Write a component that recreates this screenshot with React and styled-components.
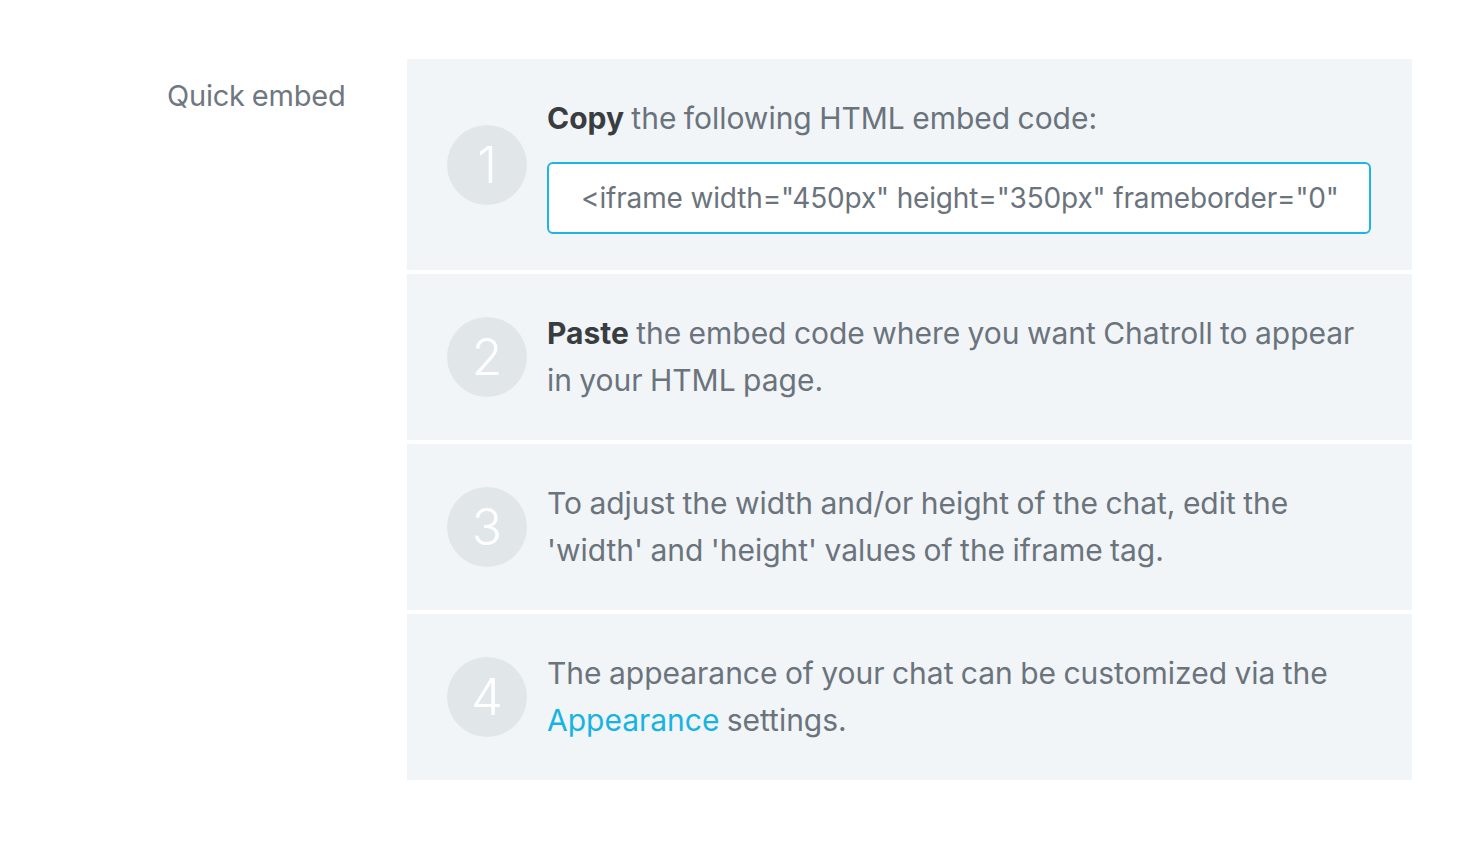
import styled, { createGlobalStyle } from "styled-components";

const GlobalStyle = createGlobalStyle`
	body {
		margin: 0;
		background: #fff;
		font-family: Inter, "Noto Sans", sans-serif;
	}
`;

const Page = styled.div`
	display: grid;
	grid-template-columns: 240px 1005px;
	padding: 59px 0 0 167px;
`;

const Label = styled.div`
	font-size: 29px;
	line-height: 47px;
	color: #6f7780;
	letter-spacing: -0.2px;
	word-spacing: -1px;
	padding-top: 13px;
`;

const Panel = styled.div`
	display: flex;
	flex-direction: column;
	gap: 4px;
`;

const Step = styled.div`
	display: flex;
	align-items: center;
	gap: 20px;
	background: #f1f5f8;
	padding: 36px 41px 36px 40px;
	min-height: 94px;
`;

const Circle = styled.div`
	flex: none;
	width: 80px;
	height: 80px;
	border-radius: 50%;
	background: #e1e6e9;
	color: #fff;
	font-size: 50px;
	font-weight: 300;
	display: flex;
	align-items: center;
	justify-content: center;
`;

const Body = styled.div`
	flex: 1;
	display: flex;
	flex-direction: column;
	gap: 20px;
`;

const Text = styled.p`
	margin: 0;
	font-size: 30px;
	line-height: 47px;
	color: #6b737c;
	letter-spacing: -0.02px;
	word-spacing: -1px;
`;

const Strong = styled.b`
	font-weight: 700;
	color: #3a3d40;
`;

const Link = styled.a`
	color: #17b3e3;
	text-decoration: none;
`;

const CodeBox = styled.input`
	box-sizing: border-box;
	width: 100%;
	height: 72px;
	border: 2px solid #1fb5e2;
	border-radius: 6px;
	background: #fff;
	padding: 0 32px;
	font-family: inherit;
	font-size: 28px;
	color: #6b737c;
	letter-spacing: -0.15px;
	outline: none;
`;

const steps = [
	{
		id: 1,
		content: (
			<>
				<Strong>Copy</Strong> the following HTML embed code:
			</>
		),
		code: '<iframe width="450px" height="350px" frameborder="0"',
	},
	{
		id: 2,
		content: (
			<>
				<Strong>Paste</Strong> the embed code where you want Chatroll to appear
				in your HTML page.
			</>
		),
	},
	{
		id: 3,
		content:
			"To adjust the width and/or height of the chat, edit the 'width' and 'height' values of the iframe tag.",
	},
	{
		id: 4,
		content: (
			<>
				The appearance of your chat can be customized via the{" "}
				<Link href="#">Appearance</Link> settings.
			</>
		),
	},
];

const App = () => {
	return (
		<>
			<GlobalStyle />
			<Page>
				<Label>Quick embed</Label>
				<Panel>
					{steps.map((step) => (
						<Step key={step.id}>
							<Circle>{step.id}</Circle>
							<Body>
								<Text>{step.content}</Text>
								{step.code && <CodeBox readOnly value={step.code} />}
							</Body>
						</Step>
					))}
				</Panel>
			</Page>
		</>
	);
};

export default App;
